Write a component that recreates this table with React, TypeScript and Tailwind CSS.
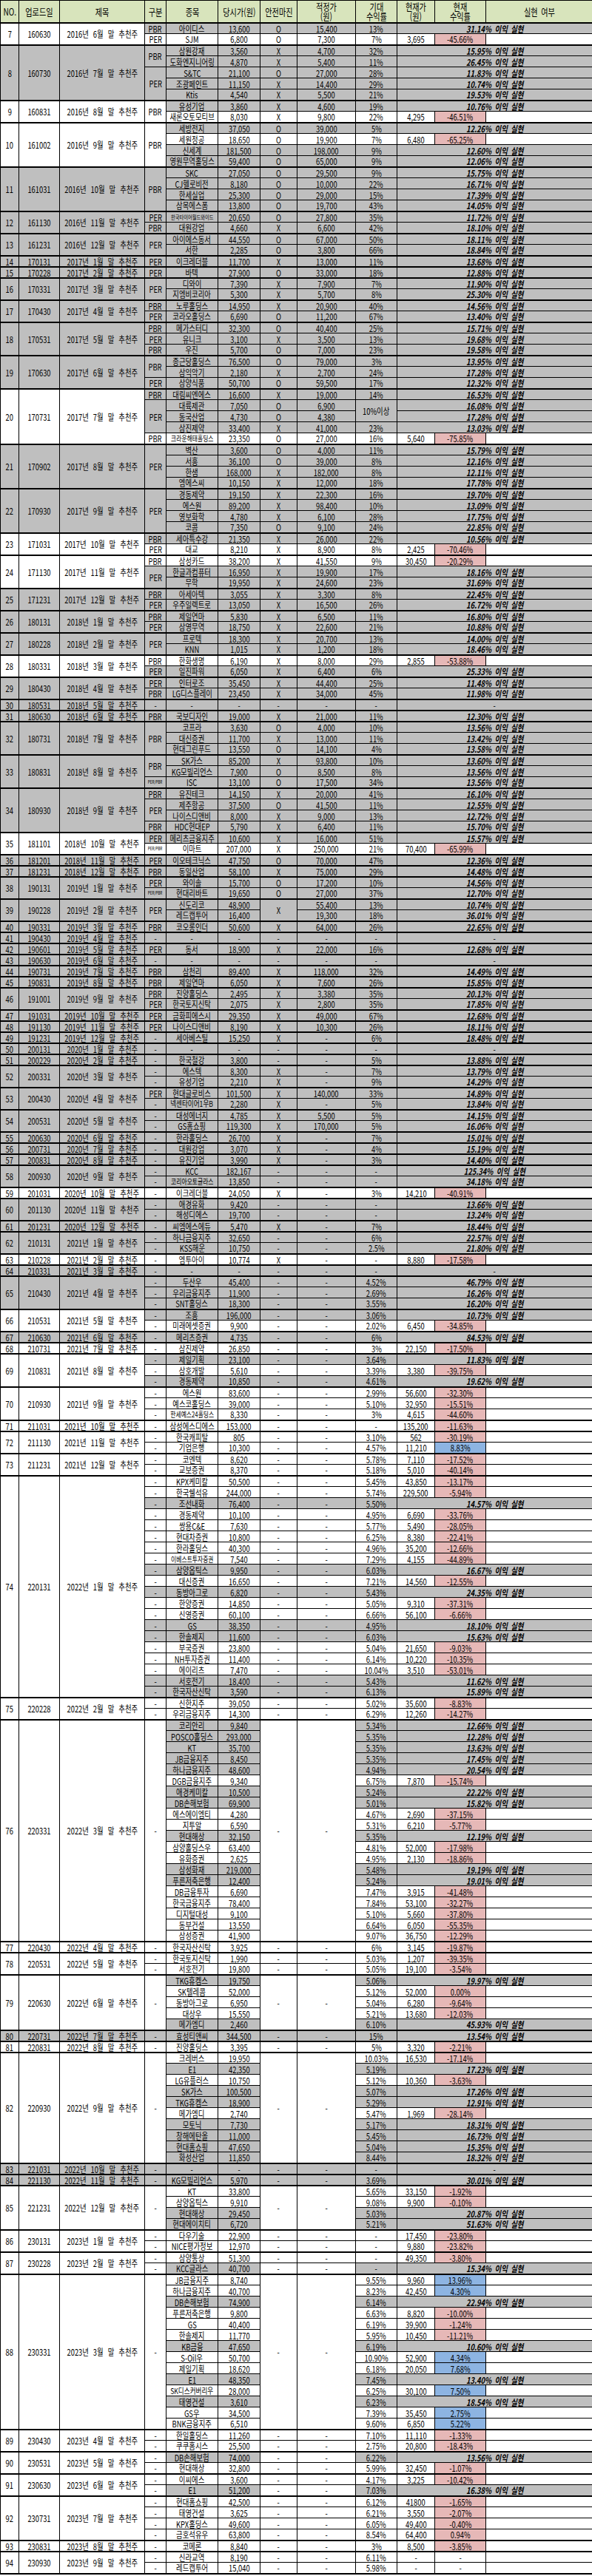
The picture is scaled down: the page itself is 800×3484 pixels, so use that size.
import React from "react";

type Grp = { n: number; d: string; t: string; g?: string; m?: boolean; r: string[] };

const DATA: Grp[] = [
  { n: 7, d: "160630", t: "2016년 6월", g: "PBR1,PER1", r: ["아이디스|13,600|O|15,400|13%|31.14%", "SJM|6,800|O|7,300|7%|3,695|-45.66%"] },
  { n: 8, d: "160730", t: "2016년 7월", g: "PBR2,PER3", r: ["삼원강재|3,560|X|4,700|32%|15.95%", "도화엔지니어링|4,870|X|5,400|11%|26.45%", "S&TC|21,100|O|27,000|28%|11.83%", "조광페인트|11,150|X|14,400|29%|10.74%", "Ktis|4,540|X|5,500|21%|19.53%"] },
  { n: 9, d: "160831", t: "2016년 8월", g: "PBR2", r: ["유성기업|3,860|X|4,600|19%|10.76%", "새론오토모티브|8,030|X|9,800|22%|4,295|-46.51%"] },
  { n: 10, d: "161002", t: "2016년 9월", g: "PBR4", r: ["세방전지|37,050|O|39,000|5%|12.26%", "세원정공|18,650|O|19,900|7%|6,480|-65.25%", "신세계|181,500|O|198,000|9%|12.60%", "영원무역홀딩스|59,400|O|65,000|9%|12.06%"] },
  { n: 11, d: "161031", t: "2016년 10월", g: "PBR4", r: ["SKC|27,050|O|29,500|9%|15.75%", "CJ헬로비전|8,180|O|10,000|22%|16.71%", "한세실업|25,300|O|29,000|15%|17.39%", "삼목에스폼|13,800|O|19,700|43%|14.05%"] },
  { n: 12, d: "161130", t: "2016년 11월", g: "PER1,PBR1", r: ["한국타이어월드와이드|20,650|O|27,800|35%|11.72%", "대원강업|4,660|X|6,600|42%|18.10%"] },
  { n: 13, d: "161231", t: "2016년 12월", g: "PER2", r: ["아이에스동서|44,550|O|67,000|50%|18.11%", "서한|2,285|O|3,800|66%|18.84%"] },
  { n: 14, d: "170131", t: "2017년 1월", g: "PER1", r: ["이크레더블|11,700|X|13,000|11%|13.68%"] },
  { n: 15, d: "170228", t: "2017년 2월", g: "PER1", r: ["바텍|27,900|O|33,000|18%|12.88%"] },
  { n: 16, d: "170331", t: "2017년 3월", g: "PER2", r: ["디와이|7,390|X|7,900|7%|11.90%", "지엠비코리아|5,300|X|5,700|8%|25.30%"] },
  { n: 17, d: "170430", t: "2017년 4월", g: "PBR1,PER1", r: ["노루홀딩스|14,950|X|20,900|40%|14.56%", "코라오홀딩스|6,690|O|11,200|67%|13.40%"] },
  { n: 18, d: "170531", t: "2017년 5월", g: "PBR1,PER1,PBR1", r: ["메가스터디|32,300|O|40,400|25%|15.71%", "유니크|3,100|X|3,500|13%|19.68%", "우진|5,700|O|7,000|23%|19.58%"] },
  { n: 19, d: "170630", t: "2017년 6월", g: "PBR2,PER1", r: ["종근당홀딩스|76,500|O|79,000|3%|13.95%", "삼익악기|2,180|X|2,700|24%|17.28%", "삼양식품|50,700|O|59,500|17%|12.32%"] },
  { n: 20, d: "170731", t: "2017년 7월", g: "PBR1,PER3,PBR1", r: ["대림씨엔에스|16,600|X|19,000|14%|16.53%", "대륙제관|7,050|O|6,900|^2:10%이상|16.08%", "동국산업|4,730|O|4,380|~|17.28%", "삼진제약|33,400|X|41,000|23%|13.03%", "크라운해태홀딩스|23,350|O|27,000|16%|5,640|-75.85%"] },
  { n: 21, d: "170902", t: "2017년 8월", g: "PER4", r: ["벽산|3,600|O|4,000|11%|15.79%", "서흥|36,100|O|39,000|8%|12.16%", "한샘|168,000|X|182,000|8%|12.11%", "엠에스씨|10,150|X|12,000|18%|17.78%"] },
  { n: 22, d: "170930", t: "2017년 9월", g: "PER4", r: ["경동제약|19,150|X|22,300|16%|19.70%", "에스원|89,200|X|98,400|10%|13.09%", "영보화학|4,780|X|6,100|28%|17.75%", "코콤|7,350|O|9,100|24%|22.85%"] },
  { n: 23, d: "171031", t: "2017년 10월", g: "PBR1,PER1", r: ["세아특수강|21,350|X|26,000|22%|10.56%", "대교|8,210|X|8,900|8%|2,425|-70.46%"] },
  { n: 24, d: "171130", t: "2017년 11월", g: "PBR1,PER2", r: ["삼성카드|38,200|X|41,550|9%|30,450|-20.29%", "한글과컴퓨터|16,950|X|19,900|17%|18.16%", "무학|19,950|X|24,600|23%|31.69%"] },
  { n: 25, d: "171231", t: "2017년 12월", g: "PBR1,PER1", r: ["아세아텍|3,055|X|3,300|8%|22.45%", "우주일렉트로|13,050|X|16,500|26%|16.72%"] },
  { n: 26, d: "180131", t: "2018년 1월", g: "PBR1,PER1", r: ["제일연마|5,830|X|6,500|11%|16.80%", "삼영무역|18,750|X|22,600|21%|10.88%"] },
  { n: 27, d: "180228", t: "2018년 2월", g: "PER2", r: ["프로텍|18,300|X|20,700|13%|14.00%", "KNN|1,015|X|1,200|18%|18.46%"] },
  { n: 28, d: "180331", t: "2018년 3월", g: "PBR1,PER1", r: ["한화생명|6,190|X|8,000|29%|2,855|-53.88%", "일진파워|6,050|X|6,400|6%|25.33%"] },
  { n: 29, d: "180430", t: "2018년 4월", g: "PER1,PBR1", r: ["인터로조|35,450|X|44,400|25%|11.48%", "LG디스플레이|23,450|X|34,000|45%|11.98%"] },
  { n: 30, d: "180531", t: "2018년 5월", r: ["-|-|-|-|-|-"] },
  { n: 31, d: "180630", t: "2018년 6월", g: "PBR1", r: ["국보디자인|19,000|X|21,000|11%|12.30%"] },
  { n: 32, d: "180731", t: "2018년 7월", g: "PBR3", r: ["코프라|3,630|O|4,000|10%|13.56%", "대신증권|11,700|X|13,000|11%|13.42%", "현대그린푸드|13,550|O|14,100|4%|13.58%"] },
  { n: 33, d: "180831", t: "2018년 8월", g: "PBR2,PER/PBR1", r: ["SK가스|85,200|X|93,800|10%|13.60%", "KG모빌리언스|7,900|O|8,500|8%|13.56%", "ISC|13,100|O|17,500|34%|13.56%"] },
  { n: 34, d: "180930", t: "2018년 9월", g: "PBR1,PER2,PBR1", r: ["유진테크|14,150|X|20,000|41%|16.10%", "제주항공|37,500|O|41,500|11%|12.55%", "나이스디앤비|8,000|X|9,000|13%|12.72%", "HDC현대EP|5,790|X|6,400|11%|15.70%"] },
  { n: 35, d: "181101", t: "2018년 10월", g: "PER1,PER/PBR1", r: ["메리츠금융지주|10,600|X|16,000|51%|15.57%", "이마트|207,000|X|250,000|21%|70,400|-65.99%"] },
  { n: 36, d: "181201", t: "2018년 11월", g: "PER1", r: ["이오테크닉스|47,750|O|70,000|47%|12.36%"] },
  { n: 37, d: "181231", t: "2018년 12월", g: "PBR1", r: ["동일산업|58,100|X|75,000|29%|14.48%"] },
  { n: 38, d: "190131", t: "2019년 1월", g: "PER1,PER/PBR1", r: ["와이솔|15,700|O|17,200|10%|14.56%", "현대리바트|19,650|O|27,000|37%|12.70%"] },
  { n: 39, d: "190228", t: "2019년 2월", g: "PER2", r: ["신도리코|48,900|^2:X|55,400|13%|10.74%", "레드캡투어|16,400|~|19,300|18%|36.01%"] },
  { n: 40, d: "190331", t: "2019년 3월", g: "PBR1", r: ["코오롱인더|50,600|X|64,000|26%|22.65%"] },
  { n: 41, d: "190430", t: "2019년 4월", r: ["-|-|-|-|-|-"] },
  { n: 42, d: "190601", t: "2019년 5월", g: "PER1", r: ["동서|18,900|X|22,000|16%|12.68%"] },
  { n: 43, d: "190630", t: "2019년 6월", r: ["-|-|-|-|-|-"] },
  { n: 44, d: "190731", t: "2019년 7월", g: "PBR1", r: ["삼천리|89,400|X|118,000|32%|14.49%"] },
  { n: 45, d: "190831", t: "2019년 8월", g: "PBR1", r: ["제일연마|6,050|X|7,600|26%|15.85%"] },
  { n: 46, d: "191001", t: "2019년 9월", g: "PBR1,PER1", r: ["진양홀딩스|2,495|X|3,380|35%|20.13%", "한국토지신탁|2,075|X|2,800|35%|17.85%"] },
  { n: 47, d: "191031", t: "2019년 10월", g: "PER1", r: ["금화피에스시|29,350|X|49,000|67%|12.68%"] },
  { n: 48, d: "191130", t: "2019년 11월", g: "PER1", r: ["나이스디앤비|8,190|X|10,300|26%|18.11%"] },
  { n: 49, d: "191231", t: "2019년 12월", r: ["세아베스틸|15,250|X|-|6%|18.48%"] },
  { n: 50, d: "200131", t: "2020년 1월", r: ["-|-|-|-|-|-"] },
  { n: 51, d: "200229", t: "2020년 2월", r: ["한국철강|3,800|-|-|5%|13.88%"] },
  { n: 52, d: "200331", t: "2020년 3월", r: ["에스텍|8,300|X|-|7%|13.79%", "유성기업|2,210|X|-|9%|14.29%"] },
  { n: 53, d: "200430", t: "2020년 4월", g: "PER1,-1", r: ["현대글로비스|101,500|X|140,000|33%|14.89%", "넥센타이어1우B|2,280|X|-|5%|13.84%"] },
  { n: 54, d: "200531", t: "2020년 5월", r: ["대성에너지|4,785|X|5,500|5%|14.15%", "GS홈쇼핑|119,300|X|170,000|5%|16.06%"] },
  { n: 55, d: "200630", t: "2020년 6월", r: ["한라홀딩스|26,700|X|-|7%|15.01%"] },
  { n: 56, d: "200731", t: "2020년 7월", r: ["대원강업|3,070|X|-|4%|15.19%"] },
  { n: 57, d: "200831", t: "2020년 8월", r: ["유진기업|3,990|X|-|3%|14.40%"] },
  { n: 58, d: "200930", t: "2020년 9월", r: ["KCC|182,167|-|-|-|125.34%", "코리아오토글라스|13,850|-|-|-|34.18%"] },
  { n: 59, d: "201031", t: "2020년 10월", r: ["이크레더블|24,050|X|-|3%|14,210|-40.91%"] },
  { n: 60, d: "201130", t: "2020년 11월", r: ["애경유화|9,420|-|-|-|13.66%", "해성디에스|19,700|-|-|-|13.24%"] },
  { n: 61, d: "201231", t: "2020년 12월", r: ["씨엠에스에듀|5,470|X|-|7%|18.44%"] },
  { n: 62, d: "210131", t: "2021년 1월", r: ["하나금융지주|32,650|-|-|6%|22.57%", "KSS해운|10,750|-|-|2.5%|21.80%"] },
  { n: 63, d: "210228", t: "2021년 2월", r: ["엠투아이|10,774|X|-|-|8,880|-17.58%"] },
  { n: 64, d: "210331", t: "2021년 3월", r: ["-|-|-|-|-|-"] },
  { n: 65, d: "210430", t: "2021년 4월", r: ["두산우|45,400|-|-|4.52%|46.79%", "우리금융지주|11,900|-|-|2.69%|16.26%", "SNT홀딩스|18,300|-|-|3.55%|16.20%"] },
  { n: 66, d: "210531", t: "2021년 5월", r: ["조흥|196,000|-|-|3.06%|10.73%", "미래에셋증권|9,900|-|-|2.02%|6,450|-34.85%"] },
  { n: 67, d: "210630", t: "2021년 6월", r: ["메리츠증권|4,735|-|-|6%|84.53%"] },
  { n: 68, d: "210731", t: "2021년 7월", r: ["삼진제약|26,850|-|-|3%|22,150|-17.50%"] },
  { n: 69, d: "210831", t: "2021년 8월", r: ["제일기획|23,100|-|-|3.64%|11.83%", "삼호개발|5,610|-|-|3.39%|3,380|-39.75%", "경동제약|10,850|-|-|4.61%|19.62%"] },
  { n: 70, d: "210930", t: "2021년 9월", r: ["에스원|83,600|-|-|2.99%|56,600|-32.30%", "예스코홀딩스|39,000|-|-|5.10%|32,950|-15.51%", "한세예스24홀딩스|8,330|-|-|3%|4,615|-44.60%"] },
  { n: 71, d: "211031", t: "2021년 10월", r: ["삼성에스디에스|153,000|-|-|-|135,200|-11.63%"] },
  { n: 72, d: "211130", t: "2021년 11월", r: ["한국캐피탈|805|-|-|3.10%|562|-30.19%", "기업은행|10,300|-|-|4.57%|11,210|b8.83%"] },
  { n: 73, d: "211231", t: "2021년 12월", r: ["코엔텍|8,620|-|-|5.78%|7,110|-17.52%", "교보증권|8,370|-|-|5.18%|5,010|-40.14%"] },
  {
    n: 74, d: "220131", t: "2022년 1월", r: [
      "KPX케미칼|50,500|-|-|5.45%|43,850|-13.17%",
      "한국쉘석유|244,000|-|-|5.74%|229,500|-5.94%",
      "조선내화|76,400|-|-|5.50%|14.57%",
      "경동제약|10,100|-|-|4.95%|6,690|-33.76%",
      "쌍용C&E|7,630|-|-|5.77%|5,490|-28.05%",
      "현대차증권|10,800|-|-|6.25%|8,380|-22.41%",
      "한라홀딩스|40,300|-|-|4.96%|35,200|-12.66%",
      "이베스트투자증권|7,540|-|-|7.29%|4,155|-44.89%",
      "삼양옵틱스|9,950|-|-|6.03%|16.67%",
      "대신증권|16,650|-|-|7.21%|14,560|-12.55%",
      "동방아그로|6,820|-|-|5.43%|24.35%",
      "한양증권|14,850|-|-|5.05%|9,310|-37.31%",
      "신영증권|60,100|-|-|6.66%|56,100|-6.66%",
      "GS|38,350|-|-|4.95%|18.10%",
      "한솔제지|11,600|-|-|6.03%|15.63%",
      "부국증권|23,800|-|-|5.04%|21,650|-9.03%",
      "NH투자증권|11,400|-|-|6.14%|10,220|-10.35%",
      "에이리츠|7,470|-|-|10.04%|3,510|-53.01%",
      "서호전기|18,400|-|-|5.43%|11.62%",
      "한국자산신탁|3,590|-|-|6.13%|15.89%",
    ],
  },
  { n: 75, d: "220228", t: "2022년 2월", r: ["신한지주|39,050|-|-|5.02%|35,600|-8.83%", "우리금융지주|14,300|-|-|6.29%|12,260|-14.27%"] },
  {
    n: 76, d: "220331", t: "2022년 3월", m: true, r: [
      "코리안리|9,840|-|-|5.34%|12.66%",
      "POSCO홀딩스|293,000|-|-|5.35%|12.28%",
      "KT|35,700|-|-|5.35%|13.63%",
      "JB금융지주|8,450|-|-|5.35%|17.45%",
      "하나금융지주|48,600|-|-|4.94%|20.54%",
      "DGB금융지주|9,340|-|-|6.75%|7,870|-15.74%",
      "애경케미칼|10,500|-|-|5.24%|22.22%",
      "DB손해보험|69,900|-|-|5.01%|15.82%",
      "에스에이엠티|4,280|-|-|4.67%|2,690|-37.15%",
      "지투알|6,590|-|-|5.31%|6,210|-5.77%",
      "현대해상|32,150|-|-|5.35%|12.19%",
      "삼양홀딩스우|63,400|-|-|4.81%|52,000|-17.98%",
      "유화증권|2,625|-|-|4.95%|2,130|-18.86%",
      "삼성화재|219,000|-|-|5.48%|19.19%",
      "푸른저축은행|12,400|-|-|5.24%|19.01%",
      "DB금융투자|6,690|-|-|7.47%|3,915|-41.48%",
      "한국금융지주|78,400|-|-|7.84%|53,100|-32.27%",
      "디지털대성|9,100|-|-|5.10%|5,660|-37.80%",
      "동부건설|13,550|-|-|6.64%|6,050|-55.35%",
      "삼성증권|41,900|-|-|9.07%|36,750|-12.29%",
    ],
  },
  { n: 77, d: "220430", t: "2022년 4월", r: ["한국자산신탁|3,925|-|-|6%|3,145|-19.87%"] },
  { n: 78, d: "220531", t: "2022년 5월", r: ["한국토지신탁|1,990|-|-|5.03%|1,207|-39.35%", "서호전기|19,800|-|-|5.05%|19,100|-3.54%"] },
  {
    n: 79, d: "220630", t: "2022년 6월", m: true, r: [
      "TKG휴켐스|19,750|-|-|5.06%|19.97%",
      "SK텔레콤|52,000|-|-|5.12%|52,000|0.00%",
      "동방아그로|6,950|-|-|5.04%|6,280|-9.64%",
      "대상우|15,550|-|-|5.21%|13,680|-12.03%",
      "메가엠디|2,460|-|-|6.10%|45.93%",
    ],
  },
  { n: 80, d: "220731", t: "2022년 7월", r: ["효성티앤씨|344,500|-|-|15%|13.54%"] },
  { n: 81, d: "220831", t: "2022년 8월", r: ["진양홀딩스|3,395|-|-|5%|3,320|-2.21%"] },
  {
    n: 82, d: "220930", t: "2022년 9월", m: true, r: [
      "크레버스|19,950|-|-|10.03%|16,530|-17.14%",
      "E1|42,350|-|-|5.19%|17.23%",
      "LG유플러스|10,750|-|-|5.12%|10,360|-3.63%",
      "SK가스|100,500|-|-|5.07%|17.26%",
      "TKG휴켐스|18,900|-|-|5.29%|12.91%",
      "메가엠디|2,740|-|-|5.47%|1,969|-28.14%",
      "모토닉|7,730|-|-|5.17%|18.31%",
      "창해에탄올|11,000|-|-|5.45%|16.73%",
      "현대홈쇼핑|47,650|-|-|5.04%|15.35%",
      "화성산업|11,850|-|-|8.44%|18.32%",
    ],
  },
  { n: 83, d: "221031", t: "2022년 10월", r: ["-|-|-|-|-|-"] },
  { n: 84, d: "221130", t: "2022년 11월", r: ["KG모빌리언스|5,970|-|-|3.69%|30.01%"] },
  {
    n: 85, d: "221231", t: "2022년 12월", m: true, r: [
      "KT|33,800|-|-|5.65%|33,150|-1.92%",
      "삼양옵틱스|9,910|-|-|9.08%|9,900|-0.10%",
      "현대해상|29,450|-|-|5.03%|20.87%",
      "현대에이치티|6,720|-|-|5.21%|51.63%",
    ],
  },
  { n: 86, d: "230131", t: "2023년 1월", r: ["다우기술|22,900|-|-|-|17,450|-23.80%", "NICE평가정보|12,970|-|-|-|9,880|-23.82%"] },
  { n: 87, d: "230228", t: "2023년 2월", r: ["삼양통상|51,300|-|-|-|49,350|-3.80%", "KCC글라스|40,700|-|-|-|15.34%"] },
  {
    n: 88, d: "230331", t: "2023년 3월", m: true, r: [
      "JB금융지주|8,740|-|-|9.55%|9,960|b13.96%",
      "하나금융지주|40,700|-|-|8.23%|42,450|b4.30%",
      "DB손해보험|74,900|-|-|6.14%|22.94%",
      "푸른저축은행|9,800|-|-|6.63%|8,820|-10.00%",
      "GS|40,400|-|-|6.19%|39,900|-1.24%",
      "한솔제지|11,770|-|-|5.95%|10,450|-11.21%",
      "KB금융|47,650|-|-|6.19%|10.60%",
      "S-Oil우|50,700|-|-|10.90%|52,900|b4.34%",
      "제일기획|18,620|-|-|6.18%|20,050|b7.68%",
      "E1|48,350|-|-|7.45%|13.40%",
      "SK디스커버리우|28,000|-|-|6.25%|30,100|b7.50%",
      "태영건설|3,610|-|-|6.23%|18.54%",
      "GS우|34,500|-|-|7.39%|35,450|b2.75%",
      "BNK금융지주|6,510|-|-|9.60%|6,850|b5.22%",
    ],
  },
  { n: 89, d: "230430", t: "2023년 4월", r: ["한일홀딩스|11,260|-|-|7.10%|11,110|-1.33%", "쿠쿠홈시스|25,500|-|-|2.75%|20,800|-18.43%"] },
  { n: 90, d: "230531", t: "2023년 5월", r: ["DB손해보험|74,000|-|-|6.22%|13.56%", "현대해상|32,800|-|-|5.99%|32,450|-1.07%"] },
  { n: 91, d: "230630", t: "2023년 6월", r: ["이씨에스|3,600|-|-|4.17%|3,225|-10.42%", "E1|51,200|-|-|7.03%|16.38%"] },
  { n: 92, d: "230731", t: "2023년 7월", r: ["현대홈쇼핑|42,500|-|-|6.12%|41800|-1.65%", "태영건설|3,625|-|-|6.21%|3,550|-2.07%", "KPX홀딩스|49,600|-|-|6.05%|49,400|-0.40%", "금호석유우|63,800|-|-|8.54%|64,400|0.94%"] },
  { n: 93, d: "230831", t: "2023년 8월", r: ["코메론|8,840|-|-|3%|8,500|-3.85%"] },
  { n: 94, d: "230930", t: "2023년 9월", r: ["신라교역|8,190|-|-|6.11%|-|-", "레드캡투어|15,040|-|-|5.98%|-|-"] },
];

type Row = { name: string; price: string; margin: string; fair: string; exp: string; kind: "R" | "N" | "U"; res?: string; cur?: string; ret?: string };

function parse(s: string): Row {
  const f = s.split("|");
  const [name, price, margin, fair, exp] = f;
  if (f.length === 6) return { name, price, margin, fair, exp, kind: f[5] === "-" ? "N" : "R", res: f[5] };
  return { name, price, margin, fair, exp, kind: "U", cur: f[5], ret: f[6] };
}

const COLS = [25, 55, 115, 29, 70, 57, 50, 79, 56, 51, 69, 144];

const SIZE: Record<number, string> = {
  12: "text-[12px]",
  11: "text-[11px]",
  10: "text-[10px]",
  9: "text-[9px]",
  8: "text-[8px]",
  7: "text-[7px]",
  6: "text-[6px]",
};

const SX = 0.78;

function nameSize(s: string): string {
  let w = 0;
  for (const ch of s) {
    const c = ch.charCodeAt(0);
    if (c >= 0xac00 && c <= 0xd7a3) w += 1;
    else if (/[A-Z]/.test(ch)) w += 0.62;
    else if (/[0-9]/.test(ch)) w += 0.554;
    else if (/[a-z]/.test(ch)) w += 0.5;
    else w += 0.45;
  }
  const fit = 66 / (w * SX);
  const opts = [12, 11, 10, 9, 8, 7, 6];
  for (const o of opts) if (o <= fit) return SIZE[o];
  return SIZE[6];
}

const GRAY = "bg-[#bfbfbf]";
const WHITE = "bg-white";
const PINK = "bg-[#e6b8b7]";
const BLUE = "bg-[#8db4e2]";

function T({ children, cls = "" }: { children?: React.ReactNode; cls?: string }) {
  return (
    <div className="flex h-[13px] items-center justify-center">
      <span className={`shrink-0 scale-x-[0.78] whitespace-nowrap leading-[13px] ${cls}`}>{children}</span>
    </div>
  );
}

const BASE = "border border-black p-0 text-center align-middle whitespace-nowrap overflow-hidden";

function spanOf(v: string): { text: string; span: number } | null {
  if (v === "~") return null;
  const m = v.match(/^\^(\d+):(.*)$/);
  if (m) return { text: m[2], span: Number(m[1]) };
  return { text: v, span: 1 };
}

function Group({ g }: { g: Grp }) {
  const rows = g.r.map(parse);
  const open = rows.some((r) => r.kind === "U");
  const partial = !!g.m || g.n >= 86;
  const len = rows.length;

  const segStart: Record<number, { label: string; span: number; gray: boolean }> = {};
  if (!g.m) {
    const segs = g.g
      ? g.g.split(",").map((s) => {
          const m = s.match(/^(.*?)(\d+)$/)!;
          return { label: m[1], span: Number(m[2]) };
        })
      : rows.map(() => ({ label: "-", span: 1 }));
    let idx = 0;
    for (const s of segs) {
      const sub = rows.slice(idx, idx + s.span);
      segStart[idx] = { label: s.label, span: s.span, gray: !partial && sub.every((r) => r.kind !== "U") };
      idx += s.span;
    }
  }

  return (
    <>
      {rows.map((r, i) => {
        const top = i === 0 ? " border-t-2" : "";
        const done = r.kind !== "U";
        const rowBg = done ? GRAY : WHITE;
        const sideBg = done && !partial ? GRAY : WHITE;
        const c = `${BASE}${top}`;
        const margin = spanOf(r.margin);
        const exp = spanOf(r.exp);
        const seg = segStart[i];
        let retBg = WHITE;
        let ret = r.ret ?? "";
        if (r.kind === "U") {
          if (ret.startsWith("b")) {
            retBg = BLUE;
            ret = ret.slice(1);
          } else if (ret !== "-") retBg = PINK;
        }
        return (
          <tr key={i} className="h-[15px]">
            {i === 0 && (
              <>
                <td rowSpan={len} className={`${c} ${open ? WHITE : GRAY}`}>
                  <T>{g.n}</T>
                </td>
                <td rowSpan={len} className={`${c} ${open ? WHITE : GRAY}`}>
                  <T>{g.d}</T>
                </td>
                <td rowSpan={len} className={`${c} ${open ? WHITE : GRAY}`}>
                  <T cls="[word-spacing:5px]">{`${g.t} 말 추천주`}</T>
                </td>
              </>
            )}
            {g.m && i === 0 && (
              <td rowSpan={len} className={`${c} ${WHITE}`}>
                <T>-</T>
              </td>
            )}
            {!g.m && seg && (
              <td rowSpan={seg.span} className={`${c} ${seg.gray ? GRAY : WHITE}`}>
                <T cls={seg.label === "PER/PBR" ? "text-[6px]" : ""}>{seg.label}</T>
              </td>
            )}
            <td className={`${c} ${rowBg}`}>
              <T cls={nameSize(r.name)}>{r.name}</T>
            </td>
            <td className={`${c} ${rowBg}`}>
              <T>{r.price}</T>
            </td>
            {g.m ? (
              i === 0 && (
                <>
                  <td rowSpan={len} className={`${c} ${WHITE}`}>
                    <T>-</T>
                  </td>
                  <td rowSpan={len} className={`${c} ${WHITE}`}>
                    <T>-</T>
                  </td>
                </>
              )
            ) : (
              <>
                {margin && (
                  <td rowSpan={margin.span} className={`${c} ${sideBg}`}>
                    <T>{margin.text}</T>
                  </td>
                )}
                <td className={`${c} ${sideBg}`}>
                  <T>{r.fair}</T>
                </td>
              </>
            )}
            {exp && (
              <td rowSpan={exp.span} className={`${c} ${rowBg}`}>
                <T>{exp.text}</T>
              </td>
            )}
            {r.kind === "R" && (
              <td colSpan={3} className={`${c} ${GRAY}`}>
                <T cls="font-bold italic [word-spacing:3px]">{`${r.res} 이익 실현`}</T>
              </td>
            )}
            {r.kind === "N" && (
              <td colSpan={3} className={`${c} ${GRAY}`}>
                <T>-</T>
              </td>
            )}
            {r.kind === "U" && (
              <>
                <td className={`${c} ${WHITE}`}>
                  <T>{r.cur}</T>
                </td>
                <td className={`${c} ${retBg}`}>
                  <T>{ret}</T>
                </td>
                <td className={`${c} ${WHITE}`}></td>
              </>
            )}
          </tr>
        );
      })}
    </>
  );
}

const HEAD: React.ReactNode[] = [
  "NO.",
  "업로드일",
  "제목",
  "구분",
  "종목",
  "당시가(원)",
  "안전마진",
  <>
    적정가
    <br />
    (원)
  </>,
  <>
    기대
    <br />
    수익률
  </>,
  <>
    현재가
    <br />
    (원)
  </>,
  <>
    현재
    <br />
    수익률
  </>,
  "실현 여부",
];

export default function App() {
  return (
    <div className="w-[800px] bg-white font-['Noto_Sans_CJK_KR','Noto_Sans',sans-serif] text-[12px] text-black">
      <table className="w-[800px] table-fixed border-collapse border-b-2 border-black">
        <colgroup>
          {COLS.map((w, i) => (
            <col key={i} style={{ width: w }} />
          ))}
        </colgroup>
        <thead>
          <tr className="h-[30px] bg-[#d8e4bc]">
            {HEAD.map((h, i) => (
              <th key={i} className="border border-b-2 border-black p-0 text-center align-middle font-normal text-[13px] whitespace-nowrap overflow-hidden">
                <div className="flex h-[27px] items-center justify-center">
                  <span className="shrink-0 scale-x-[0.78] whitespace-nowrap text-center leading-[13px] [word-spacing:3px]">{h}</span>
                </div>
              </th>
            ))}
          </tr>
        </thead>
        <tbody>
          {DATA.map((g) => (
            <Group key={g.n} g={g} />
          ))}
        </tbody>
      </table>
    </div>
  );
}
